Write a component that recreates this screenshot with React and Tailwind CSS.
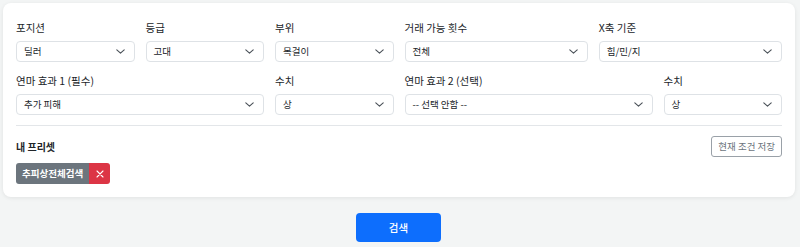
import React from "react";

const Chevron = () => (
  <svg width="9" height="5" viewBox="0 0 9 5" className="shrink-0">
    <path d="M0.8 0.8 4.5 4.2 8.2 0.8" fill="none" stroke="#495057" strokeWidth="1.1" strokeLinecap="round" strokeLinejoin="round" />
  </svg>
);

const Select = ({ value }) => (
  <div className="flex h-[21px] items-center justify-between rounded-[4px] border border-[#dee2e6] bg-white pl-[7px] pr-[9px] text-[9.5px] leading-none text-[#212529]">
    <span>{value}</span>
    <Chevron />
  </div>
);

const Field = ({ label, value, span }) => (
  <div className={span}>
    <div className="mb-[6px] h-[15px] text-[10.5px] leading-[15px] text-[#212529]">{label}</div>
    <Select value={value} />
  </div>
);

export default function App() {
  return (
    <div
      className="h-[247px] w-[800px] bg-[#f3f5f5] pl-[3px] pt-[3px]"
      style={{ fontFamily: '"Noto Sans CJK KR", "Noto Sans", sans-serif' }}
    >
      <div className="h-[194px] w-[792px] rounded-[8px] bg-white px-[13px] pt-[17px] shadow-[0_1px_4px_rgba(0,0,0,0.08)]">
        <div className="grid grid-cols-12 gap-x-[11px] gap-y-[11px]">
          <Field span="col-span-2" label="포지션" value="딜러" />
          <Field span="col-span-2" label="등급" value="고대" />
          <Field span="col-span-2" label="부위" value="목걸이" />
          <Field span="col-span-3" label="거래 가능 횟수" value="전체" />
          <Field span="col-span-3" label="X축 기준" value="힘/민/지" />
          <Field span="col-span-4" label="연마 효과 1 (필수)" value="추가 피해" />
          <Field span="col-span-2" label="수치" value="상" />
          <Field span="col-span-4" label="연마 효과 2 (선택)" value="-- 선택 안함 --" />
          <Field span="col-span-2" label="수치" value="상" />
        </div>
        <div className="mt-[10px] border-t border-[#e3e6e9]" />
        <div className="mt-[10px] flex h-[21px] items-center justify-between">
          <span className="text-[10px] font-bold text-[#212529]">내 프리셋</span>
          <button className="flex h-[21px] items-center rounded-[3px] border border-[#9aa1a8] px-[6px] text-[9.5px] leading-none text-[#6c757d]">
            현재 조건 저장
          </button>
        </div>
        <div className="mt-[6px] flex">
          <div className="flex h-[21px] items-center rounded-l-[3px] bg-[#6c757d] px-[6px] text-[9.5px] font-semibold leading-none text-white">
            추피상전체검색
          </div>
          <div className="flex h-[21px] w-[21px] items-center justify-center rounded-r-[3px] bg-[#dc3545] text-white">
            <svg width="8" height="8" viewBox="0 0 8 8">
              <path d="M1 1 7 7M7 1 1 7" stroke="white" strokeWidth="1.1" strokeLinecap="round" />
            </svg>
          </div>
        </div>
      </div>
      <div className="mt-[16px] flex justify-center pr-[6px]">
        <button className="h-[29px] w-[85px] rounded-[4px] bg-[#0d6efd] text-[10.5px] font-medium text-white">
          검색
        </button>
      </div>
    </div>
  );
}
